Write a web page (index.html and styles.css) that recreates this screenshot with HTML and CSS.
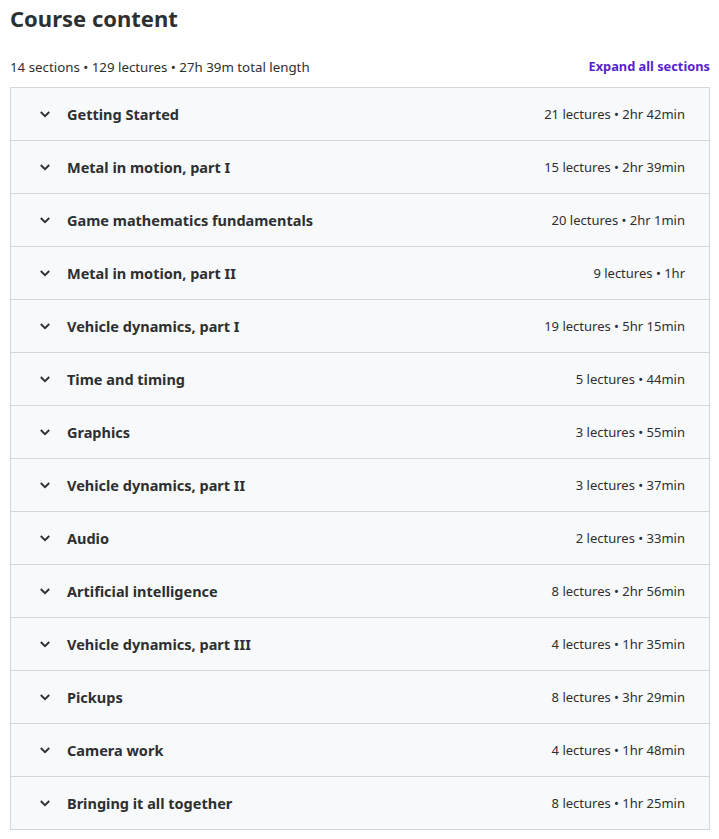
FILE: index.html
```html
<!DOCTYPE html>
<html>
<head>
<meta charset="utf-8">
<link rel="stylesheet" href="styles.css">
</head>
<body>
<div class="course">
  <h2 class="title">Course content</h2>
  <div class="meta">
    <span class="summary">14 sections • 129 lectures • 27h 39m total length</span>
    <button class="expand">Expand all sections</button>
  </div>
  <div class="sections">
    <div class="section"><span class="chev"><svg viewBox="0 0 12 12" width="12" height="12"><path d="M1.8 4 L6 8.1 L10.2 4" fill="none" stroke="#2d2f31" stroke-width="1.9"/></svg></span><span class="name">Getting Started</span><span class="info">21 lectures • 2hr 42min</span></div>
    <div class="section"><span class="chev"><svg viewBox="0 0 12 12" width="12" height="12"><path d="M1.8 4 L6 8.1 L10.2 4" fill="none" stroke="#2d2f31" stroke-width="1.9"/></svg></span><span class="name">Metal in motion, part I</span><span class="info">15 lectures • 2hr 39min</span></div>
    <div class="section"><span class="chev"><svg viewBox="0 0 12 12" width="12" height="12"><path d="M1.8 4 L6 8.1 L10.2 4" fill="none" stroke="#2d2f31" stroke-width="1.9"/></svg></span><span class="name">Game mathematics fundamentals</span><span class="info">20 lectures • 2hr 1min</span></div>
    <div class="section"><span class="chev"><svg viewBox="0 0 12 12" width="12" height="12"><path d="M1.8 4 L6 8.1 L10.2 4" fill="none" stroke="#2d2f31" stroke-width="1.9"/></svg></span><span class="name">Metal in motion, part II</span><span class="info">9 lectures • 1hr</span></div>
    <div class="section"><span class="chev"><svg viewBox="0 0 12 12" width="12" height="12"><path d="M1.8 4 L6 8.1 L10.2 4" fill="none" stroke="#2d2f31" stroke-width="1.9"/></svg></span><span class="name">Vehicle dynamics, part I</span><span class="info">19 lectures • 5hr 15min</span></div>
    <div class="section"><span class="chev"><svg viewBox="0 0 12 12" width="12" height="12"><path d="M1.8 4 L6 8.1 L10.2 4" fill="none" stroke="#2d2f31" stroke-width="1.9"/></svg></span><span class="name">Time and timing</span><span class="info">5 lectures • 44min</span></div>
    <div class="section"><span class="chev"><svg viewBox="0 0 12 12" width="12" height="12"><path d="M1.8 4 L6 8.1 L10.2 4" fill="none" stroke="#2d2f31" stroke-width="1.9"/></svg></span><span class="name">Graphics</span><span class="info">3 lectures • 55min</span></div>
    <div class="section"><span class="chev"><svg viewBox="0 0 12 12" width="12" height="12"><path d="M1.8 4 L6 8.1 L10.2 4" fill="none" stroke="#2d2f31" stroke-width="1.9"/></svg></span><span class="name">Vehicle dynamics, part II</span><span class="info">3 lectures • 37min</span></div>
    <div class="section"><span class="chev"><svg viewBox="0 0 12 12" width="12" height="12"><path d="M1.8 4 L6 8.1 L10.2 4" fill="none" stroke="#2d2f31" stroke-width="1.9"/></svg></span><span class="name">Audio</span><span class="info">2 lectures • 33min</span></div>
    <div class="section"><span class="chev"><svg viewBox="0 0 12 12" width="12" height="12"><path d="M1.8 4 L6 8.1 L10.2 4" fill="none" stroke="#2d2f31" stroke-width="1.9"/></svg></span><span class="name">Artificial intelligence</span><span class="info">8 lectures • 2hr 56min</span></div>
    <div class="section"><span class="chev"><svg viewBox="0 0 12 12" width="12" height="12"><path d="M1.8 4 L6 8.1 L10.2 4" fill="none" stroke="#2d2f31" stroke-width="1.9"/></svg></span><span class="name">Vehicle dynamics, part III</span><span class="info">4 lectures • 1hr 35min</span></div>
    <div class="section"><span class="chev"><svg viewBox="0 0 12 12" width="12" height="12"><path d="M1.8 4 L6 8.1 L10.2 4" fill="none" stroke="#2d2f31" stroke-width="1.9"/></svg></span><span class="name">Pickups</span><span class="info">8 lectures • 3hr 29min</span></div>
    <div class="section"><span class="chev"><svg viewBox="0 0 12 12" width="12" height="12"><path d="M1.8 4 L6 8.1 L10.2 4" fill="none" stroke="#2d2f31" stroke-width="1.9"/></svg></span><span class="name">Camera work</span><span class="info">4 lectures • 1hr 48min</span></div>
    <div class="section"><span class="chev"><svg viewBox="0 0 12 12" width="12" height="12"><path d="M1.8 4 L6 8.1 L10.2 4" fill="none" stroke="#2d2f31" stroke-width="1.9"/></svg></span><span class="name">Bringing it all together</span><span class="info">8 lectures • 1hr 25min</span></div>
  </div>
</div>
</body>
</html>
```
FILE: styles.css
```css
* { box-sizing: border-box; }
body {
  margin: 0;
  background: #fff;
  color: #2d2f31;
  font-family: "Noto Sans", "Open Sans", sans-serif;
}
.course {
  padding: 0 9px 0 10px;
}
.title {
  margin: 0;
  padding-top: 3px;
  font-size: 22px;
  line-height: 30px;
  font-weight: 700;
}
.meta {
  display: flex;
  justify-content: space-between;
  align-items: flex-end;
  margin-top: 24px;
  padding-bottom: 11px;
}
.summary {
  font-size: 13.3px;
  line-height: 18px;
}
.expand {
  border: none;
  background: none;
  padding: 0;
  font-family: inherit;
  font-size: 12.8px;
  line-height: 18px;
  font-weight: 700;
  color: #5624d0;
  margin-bottom: 1px;
}
.sections {
  border: 1px solid #d1d7dc;
  border-bottom: none;
}
.section {
  display: flex;
  align-items: center;
  height: 53px;
  padding: 0 24px 0 28px;
  background: #f7f9fa;
  border-bottom: 1px solid #d1d7dc;
}
.chev {
  display: flex;
  width: 12px;
  height: 12px;
  margin-right: 16px;
}
.name {
  flex: 1;
  font-size: 14.5px;
  font-weight: 700;
}
.info {
  font-size: 13px;
}
```
